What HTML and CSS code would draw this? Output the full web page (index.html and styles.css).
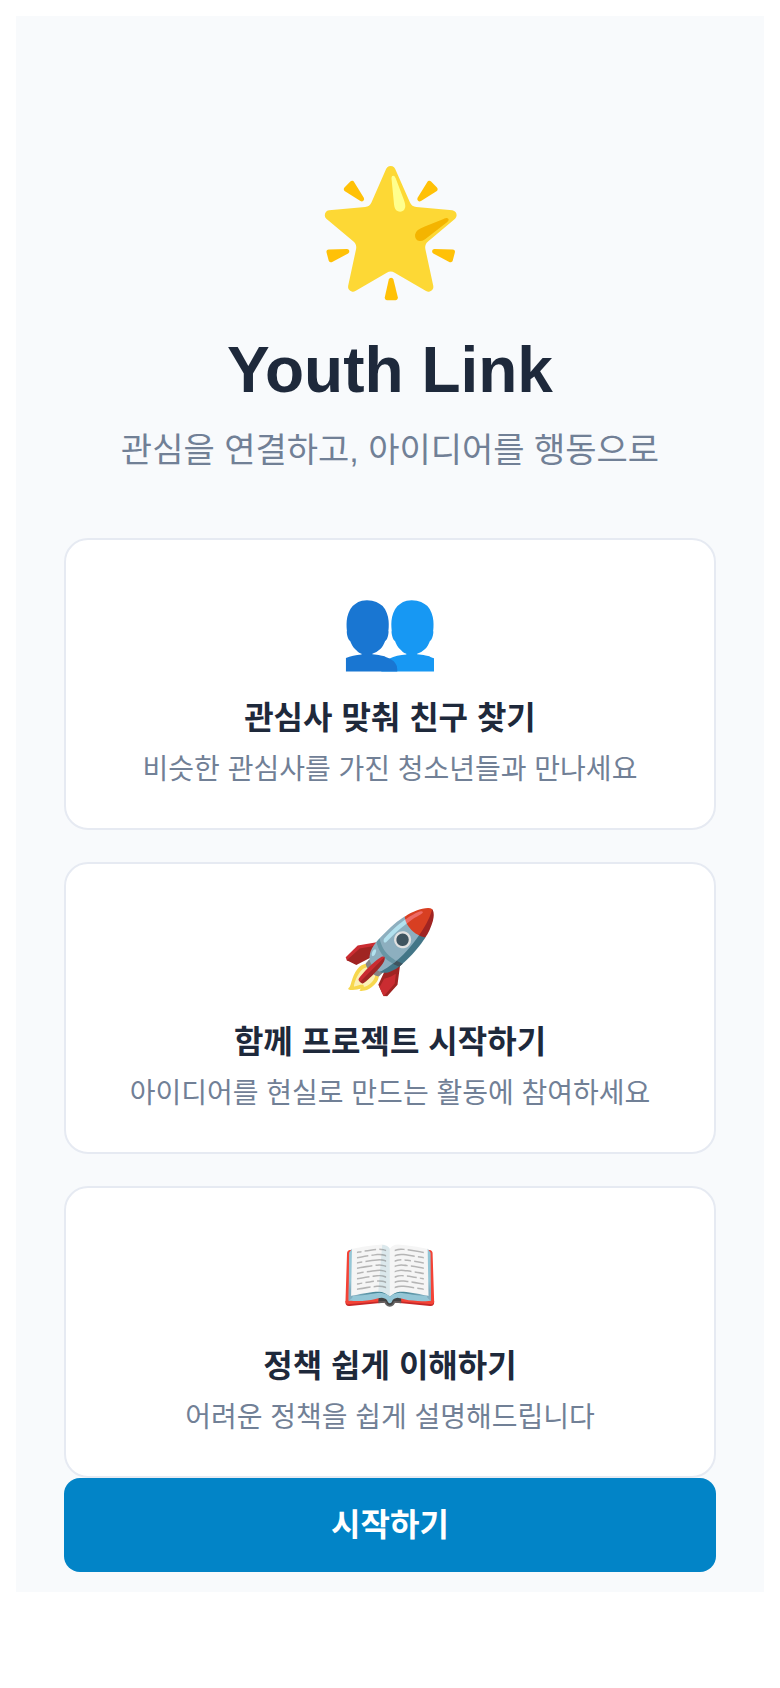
FILE: index.html
```
<!DOCTYPE html>
<html lang="ko">
<head>
  <meta charset="UTF-8">
  <title>Youth Link</title>
  <meta name="viewport" content="width=device-width,initial-scale=1">
  <link rel="stylesheet" href="styles.css">
</head>
<body>
<main class="welcome">
  <header class="hero">
    <div class="logo">🌟</div>
    <h1>Youth Link</h1>
    <p>관심을 연결하고, 아이디어를 행동으로</p>
  </header>
  <section class="features">
    <div class="card">
      <div class="icon">👥</div>
      <h2>관심사 맞춰 친구 찾기</h2>
      <p>비슷한 관심사를 가진 청소년들과 만나세요</p>
    </div>
    <div class="card">
      <div class="icon">🚀</div>
      <h2>함께 프로젝트 시작하기</h2>
      <p>아이디어를 현실로 만드는 활동에 참여하세요</p>
    </div>
    <div class="card">
      <div class="icon">📖</div>
      <h2>정책 쉽게 이해하기</h2>
      <p>어려운 정책을 쉽게 설명해드립니다</p>
    </div>
  </section>
  <button type="button" class="start">시작하기</button>
</main>
</body>
</html>
```
FILE: styles.css
```
* {
  box-sizing: border-box;
}
body {
  margin: 16px;
  background: #fff;
  color: #1e293b;
  font-family: "Liberation Sans", "Noto Sans CJK KR", sans-serif;
  text-align: center;
}
h1, h2, p {
  margin: 0;
}
.welcome {
  background: #f8fafc;
  padding: 128px 48px 20px;
}
.logo {
  font-size: 120px;
  line-height: 172px;
}
h1 {
  font-size: 64px;
  line-height: 72px;
  margin-top: 18px;
}
.hero p {
  font-size: 34px;
  line-height: 48px;
  margin-top: 20px;
  color: #718096;
}
.features {
  display: grid;
  gap: 32px;
  margin-top: 64px;
}
.card {
  background: #fff;
  border: 2px solid #e6eaf2;
  border-radius: 24px;
  padding: 38px 32px;
}
.icon {
  font-size: 80px;
  line-height: 100px;
}
h2 {
  font-size: 32px;
  line-height: 40px;
  margin-top: 20px;
}
.card p {
  font-size: 28px;
  line-height: 40px;
  margin-top: 12px;
  color: #718096;
}
.start {
  display: block;
  width: 100%;
  padding: 24px;
  border: 0;
  border-radius: 16px;
  background: #0284c7;
  color: #fff;
  font: bold 32px/46px "Liberation Sans", "Noto Sans CJK KR", sans-serif;
}
```
